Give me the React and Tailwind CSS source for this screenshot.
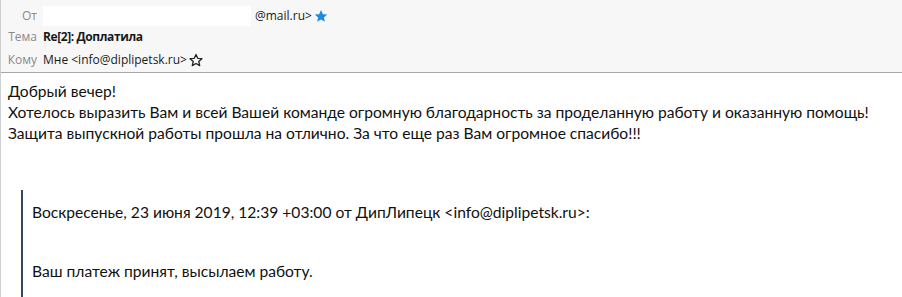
import React from "react";

function StarFilled() {
  return (
    <svg width="14" height="14" viewBox="0 0 24 24" className="inline-block">
      <path d="M12 1.8l3.1 7 7.6.7-5.8 5 1.8 7.5L12 18l-6.7 4 1.8-7.5-5.8-5 7.6-.7z" fill="#1e88e5" />
    </svg>
  );
}
function StarOutline() {
  return (
    <svg width="14" height="14" viewBox="0 0 24 24" className="inline-block">
      <path d="M12 2.5l3 6.6 7.2.7-5.5 4.8 1.7 7.1L12 18l-6.4 3.7 1.7-7.1-5.5-4.8 7.2-.7z" fill="none" stroke="#222" strokeWidth="2.2" strokeLinejoin="round" />
    </svg>
  );
}

export default function App() {
  return (
    <div className="w-[902px] h-[297px] overflow-hidden bg-white border-l border-[#cfcfcf] text-[#1a1a1a]">
      <div className="h-[73px] bg-[#f7f7f7] border-b border-[#a8a8a8] pt-[5px] text-[12px]" style={{ fontFamily: "'Open Sans', sans-serif" }}>
        <div className="flex items-center h-[21px]">
          <div className="w-[36px] text-right text-[#8a8a8a]">От</div>
          <div className="ml-[6px] flex items-center">
            <div className="w-[208px] h-[20px] bg-white"></div>
            <span className="ml-[4px]">@mail.ru&gt;</span>
            <span className="ml-[2px] flex"><StarFilled /></span>
          </div>
        </div>
        <div className="flex items-center h-[22px]">
          <div className="w-[36px] text-right text-[#8a8a8a]">Тема</div>
          <div className="ml-[6px] font-bold tracking-[-0.4px]">Re[2]: Доплатила</div>
        </div>
        <div className="flex items-center h-[24px]">
          <div className="w-[36px] text-right text-[#8a8a8a]">Кому</div>
          <div className="ml-[6px] flex items-center">
            <span>Мне &lt;info@diplipetsk.ru&gt;</span>
            <span className="ml-[2px] flex"><StarOutline /></span>
          </div>
        </div>
      </div>
      <div className="pl-[7px] pt-[8px] text-[15.6px] leading-[21px] text-[#111]" style={{ fontFamily: "Lato, 'Open Sans', sans-serif" }}>
        <div>Добрый вечер!</div>
        <div>Хотелось выразить Вам и всей Вашей команде огромную благодарность за проделанную работу и оказанную помощь!</div>
        <div>Защита выпускной работы прошла на отлично. За что еще раз Вам огромное спасибо!!!</div>
        <div className="mt-[46px] ml-[13px] border-l-2 border-[#34495e] pl-[9px] pt-[12px] pb-[20px]">
          <div>Воскресенье, 23 июня 2019, 12:39 +03:00 от ДипЛипецк &lt;info@diplipetsk.ru&gt;:</div>
          <div className="mt-[38px]">Ваш платеж принят, высылаем работу.</div>
        </div>
      </div>
    </div>
  );
}
